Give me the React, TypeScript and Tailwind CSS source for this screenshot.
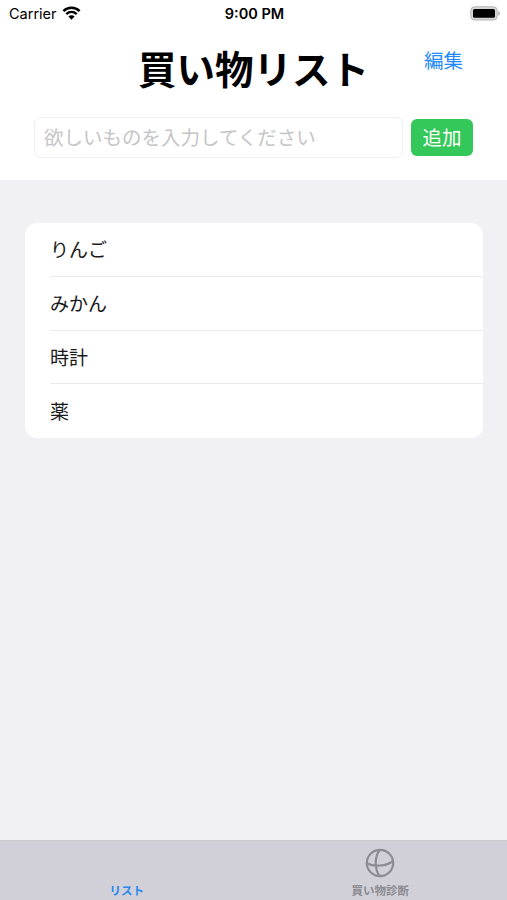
import { useState } from "react";

const INITIAL_ITEMS = ["りんご", "みかん", "時計", "薬"];

function StatusBar() {
  return (
    <div className="grid h-[27px] grid-cols-3 items-center pr-[7px] pl-[9px] text-black">
      <div className="flex items-center gap-[5px] text-[14.5px] leading-[27px]">
        <span>Carrier</span>
        <svg className="mb-[2px]" width="19" height="14" viewBox="0 0 18 14" fill="none" stroke="currentColor">
          <path d="M0.9 5.1a11.5 11.5 0 0 1 16.2 0" strokeWidth="2.5" />
          <path d="M3.8 8.1a7.4 7.4 0 0 1 10.4 0" strokeWidth="2.3" />
          <path d="M9 13.7 5.9 10.5a4.4 4.4 0 0 1 6.2 0Z" fill="currentColor" stroke="none" />
        </svg>
      </div>
      <div className="text-center text-[14.5px] leading-[27px] font-semibold whitespace-nowrap">
        9:00 PM
      </div>
      <svg className="justify-self-end" width="30" height="15" viewBox="0 0 30 15">
        <rect x="0.8" y="0.8" width="26.4" height="13.2" rx="3.8" fill="#d8d8d8" stroke="#b4b4b4" />
        <rect x="3" y="3" width="22" height="8.8" rx="1.6" fill="#000" />
        <path d="M28.4 5.1c1.9.9 1.9 3.7 0 4.6Z" fill="#a6a6a6" />
      </svg>
    </div>
  );
}

function TabBar() {
  return (
    <nav className="grid h-[60px] grid-cols-2 border-t border-[#cbcbcd] bg-[#d1d0d8] text-[11.5px] leading-[16px] font-bold">
      <button className="flex flex-col items-center justify-end pb-[1px] text-[#2787ee]">
        リスト
      </button>
      <button className="flex flex-col items-center justify-end pb-[1px] text-[#8b8b91]">
        <svg
          className="mb-[5px]"
          width="30"
          height="30"
          viewBox="0 0 30 30"
          fill="none"
          stroke="currentColor"
          strokeWidth="2.2"
        >
          <circle cx="15" cy="15" r="13.2" />
          <path d="M15 1.8C9.4 8.5 9.2 20.5 14.6 28.2" />
          <path d="M1.8 15.2C9 19 21.5 18.4 28 12.8" />
        </svg>
        買い物診断
      </button>
    </nav>
  );
}

export default function App() {
  const [items, setItems] = useState(INITIAL_ITEMS);
  const [text, setText] = useState("");

  const addItem = () => {
    if (!text.trim()) return;
    setItems([...items, text]);
    setText("");
  };

  return (
    <div className="flex h-screen flex-col bg-[#f0f0f5] font-['Inter','Noto_Sans_CJK_JP',sans-serif]">
      <div className="h-[180px] bg-white">
        <StatusBar />
        <header className="grid h-[90px] grid-cols-[138px_1fr_140px]">
          <h1 className="col-start-2 pt-[15px] text-[38.5px] leading-[56px] font-bold whitespace-nowrap text-black">
            買い物リスト
          </h1>
          <button className="self-start pt-[20px] pl-[55px] text-left text-[19.5px] leading-[28px] text-[#2289fa]">
            編集
          </button>
        </header>
        <div className="flex items-center gap-[8px] pl-[34px]">
          <input
            className="h-[41px] w-[369px] rounded-[7px] border border-[#efefef] pt-[1px] pr-[8px] pl-[9px] text-[19.5px] text-black outline-none placeholder:text-[#c5c5c7]"
            placeholder="欲しいものを入力してください"
            value={text}
            onChange={(e) => setText(e.target.value)}
          />
          <button
            className="h-[37px] w-[62px] rounded-[6px] bg-[#34c759] pt-[2px] text-[19.5px] text-white"
            onClick={addItem}
          >
            追加
          </button>
        </div>
      </div>

      <main className="flex-1 pt-[43px] pr-[24px] pl-[25px]">
        <ul className="overflow-hidden rounded-[12px] bg-white pl-[25px] text-[19px] text-[#1a1a1a]">
          {items.map((item, i) => (
            <li
              key={i}
              className="flex h-[53.75px] items-center border-b border-[#ebebed] pt-[4px] last:border-b-0"
            >
              {item}
            </li>
          ))}
        </ul>
      </main>

      <TabBar />
    </div>
  );
}
